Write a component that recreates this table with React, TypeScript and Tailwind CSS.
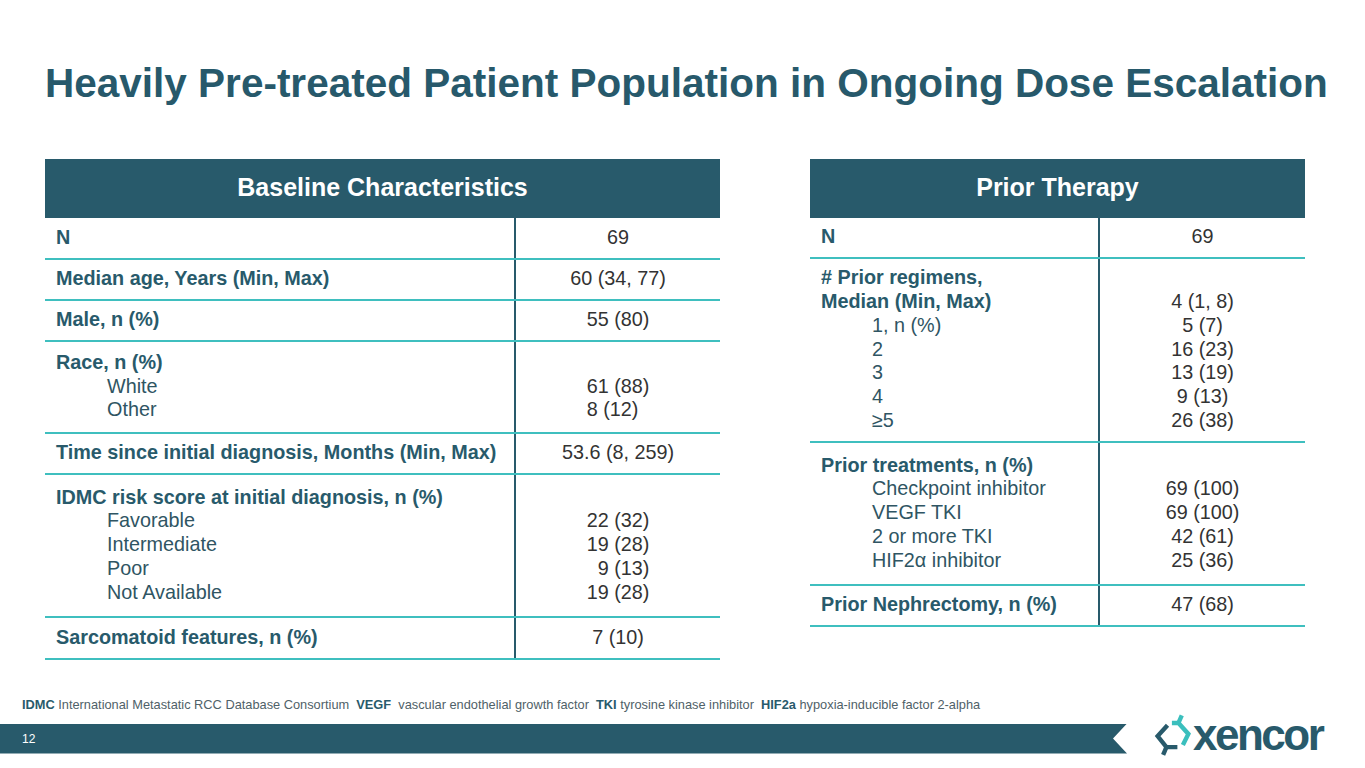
const TEAL_DARK = "text-[#285a6b]";

type Line = { label: string; value?: string; sub?: boolean };
type Row = { h: string; lines: Line[]; valueAlign?: string };

const BASELINE: Row[] = [
  { h: "h-[42px]", lines: [{ label: "N", value: "69" }] },
  { h: "h-[41px]", lines: [{ label: "Median age, Years (Min, Max)", value: "60 (34, 77)" }] },
  { h: "h-[41px]", lines: [{ label: "Male, n (%)", value: "55 (80)" }] },
  {
    h: "h-[92px]",
    valueAlign: "text-left",
    lines: [
      { label: "Race, n (%)" },
      { label: "White", value: "61 (88)", sub: true },
      { label: "Other", value: "8 (12)", sub: true },
    ],
  },
  { h: "h-[41px]", lines: [{ label: "Time since initial diagnosis, Months (Min, Max)", value: "53.6 (8, 259)" }] },
  {
    h: "h-[143px]",
    valueAlign: "text-right",
    lines: [
      { label: "IDMC risk score at initial diagnosis, n (%)" },
      { label: "Favorable", value: "22 (32)", sub: true },
      { label: "Intermediate", value: "19 (28)", sub: true },
      { label: "Poor", value: "9 (13)", sub: true },
      { label: "Not Available", value: "19 (28)", sub: true },
    ],
  },
  { h: "h-[42px]", lines: [{ label: "Sarcomatoid features, n (%)", value: "7 (10)" }] },
];

const PRIOR: Row[] = [
  { h: "h-[41px]", lines: [{ label: "N", value: "69" }] },
  {
    h: "h-[184px]",
    lines: [
      { label: "# Prior regimens," },
      { label: "Median (Min, Max)", value: "4 (1, 8)" },
      { label: "1, n (%)", value: "5 (7)", sub: true },
      { label: "2", value: "16 (23)", sub: true },
      { label: "3", value: "13 (19)", sub: true },
      { label: "4", value: "9 (13)", sub: true },
      { label: "≥5", value: "26 (38)", sub: true },
    ],
  },
  {
    h: "h-[143px]",
    lines: [
      { label: "Prior treatments, n (%)" },
      { label: "Checkpoint inhibitor", value: "69 (100)", sub: true },
      { label: "VEGF TKI", value: "69 (100)", sub: true },
      { label: "2 or more TKI", value: "42 (61)", sub: true },
      { label: "HIF2α inhibitor", value: "25 (36)", sub: true },
    ],
  },
  { h: "h-[41px]", lines: [{ label: "Prior Nephrectomy, n (%)", value: "47 (68)" }] },
];

function DataTable({ title, rows, width, labelWidth }: { title: string; rows: Row[]; width: string; labelWidth: string }) {
  return (
    <div className={width}>
      <div className="h-[59px] bg-[#285a6b] flex items-center justify-center text-white font-bold text-[25px]">
        {title}
      </div>
      {rows.map((row, i) => (
        <div key={i} className={`flex ${row.h} border-b-2 border-[#3fbfbf]`}>
          <div className={`${labelWidth} shrink-0 border-r-2 border-[#285a6b] flex flex-col justify-center pl-[11px]`}>
            {row.lines.map((l, j) => (
              <div
                key={j}
                className={
                  l.sub
                    ? "pl-[51px] text-[#2f5563] leading-[23.75px]"
                    : `font-bold ${TEAL_DARK} leading-[23.75px]`
                }
              >
                {l.label}
              </div>
            ))}
          </div>
          <div className="flex-1 flex items-center justify-center">
            <div className={`${row.valueAlign ?? "text-center"} text-[#333333]`}>
              {row.lines.map((l, j) => (
                <div key={j} className="leading-[23.75px] whitespace-pre">
                  {l.value ?? " "}
                </div>
              ))}
            </div>
          </div>
        </div>
      ))}
    </div>
  );
}

function LogoMark() {
  return (
    <svg width="38" height="45" viewBox="5 3 34 41" fill="none" strokeWidth="4" strokeLinejoin="miter">
      <polyline points="17,15 8,25 16,35 26,35" stroke="#285a6b" />
      <line x1="16" y1="35" x2="13" y2="42" stroke="#285a6b" />
      <polyline points="21,13 27,13 36,23 31,33" stroke="#3bbfbd" />
      <line x1="27" y1="13" x2="30" y2="6" stroke="#3bbfbd" />
    </svg>
  );
}

export default function App() {
  return (
    <div className="w-[1365px] h-[768px] overflow-hidden bg-white flex flex-col font-['Liberation_Sans',Arial,sans-serif]">
      {/* Title */}
      <h1 className="mt-[63px] pl-[45px] text-[40.5px] leading-none font-bold text-[#27596b] whitespace-nowrap">
        Heavily Pre-treated Patient Population in Ongoing Dose Escalation
      </h1>

      {/* Tables */}
      <div className="mt-[55px] pl-[45px] flex items-start gap-[90px] text-[19.8px]">
        <DataTable title="Baseline Characteristics" rows={BASELINE} width="w-[675px]" labelWidth="w-[471px]" />
        <DataTable title="Prior Therapy" rows={PRIOR} width="w-[495px]" labelWidth="w-[290px]" />
      </div>

      {/* Footnote */}
      <p className="mt-[38px] pl-[22px] text-[12.8px] leading-[14px] text-[#4f6168] whitespace-pre">
        <b className={TEAL_DARK}>IDMC</b> International Metastatic RCC Database Consortium{"  "}
        <b className={TEAL_DARK}>VEGF</b>{"  "}vascular endothelial growth factor{"  "}
        <b className={TEAL_DARK}>TKI</b> tyrosine kinase inhibitor{"  "}
        <b className={TEAL_DARK}>HIF2a</b> hypoxia-inducible factor 2-alpha
      </p>

      {/* Footer */}
      <div className="mt-[3px] h-[48px] flex items-center">
        <div className="w-[1127px] h-[30px] bg-[#285a6b] flex items-center pl-[22px] text-white text-[12px] [clip-path:polygon(0_0,100%_0,calc(100%-14px)_50%,100%_100%,0_100%)]">
          12
        </div>
        <div className="ml-[27px] -mt-[8px] flex items-center">
          <LogoMark />
          <span className="ml-[1px] text-[44px] leading-none font-bold tracking-[-2.5px] text-[#285a6b]">xencor</span>
        </div>
      </div>
    </div>
  );
}
